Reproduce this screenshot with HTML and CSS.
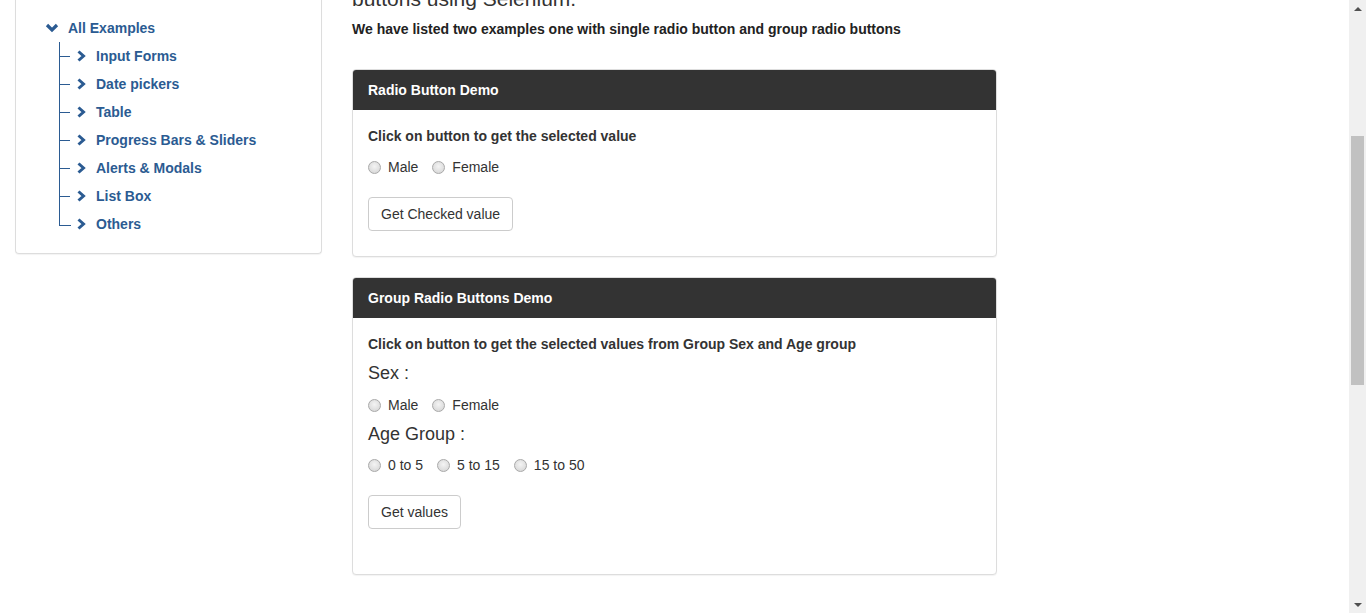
FILE: index.html
```html
<!DOCTYPE html>
<html lang="en">
<head>
<meta charset="utf-8">
<title>Radio Button Demo</title>
<link rel="stylesheet" href="styles.css">
</head>
<body>
<div class="viewport">
  <div class="page">
    <aside class="sidebar-col">
      <div class="side-panel">
        <ul class="tree">
          <li class="tree-root">
            <a class="tree-link root-link" href="#">
              <svg class="chev-down" width="14" height="10" viewBox="0 0 14 10"><polyline points="2,2 7,7 12,2" fill="none" stroke="currentColor" stroke-width="3.2"/></svg>
              All Examples
            </a>
            <ul class="tree-children">
              <li><a class="tree-link" href="#"><svg class="chev-right" width="10" height="12" viewBox="0 0 10 12"><polyline points="1.5,1.5 6.5,6 1.5,10.5" fill="none" stroke="currentColor" stroke-width="3"/></svg>Input Forms</a></li>
              <li><a class="tree-link" href="#"><svg class="chev-right" width="10" height="12" viewBox="0 0 10 12"><polyline points="1.5,1.5 6.5,6 1.5,10.5" fill="none" stroke="currentColor" stroke-width="3"/></svg>Date pickers</a></li>
              <li><a class="tree-link" href="#"><svg class="chev-right" width="10" height="12" viewBox="0 0 10 12"><polyline points="1.5,1.5 6.5,6 1.5,10.5" fill="none" stroke="currentColor" stroke-width="3"/></svg>Table</a></li>
              <li><a class="tree-link" href="#"><svg class="chev-right" width="10" height="12" viewBox="0 0 10 12"><polyline points="1.5,1.5 6.5,6 1.5,10.5" fill="none" stroke="currentColor" stroke-width="3"/></svg>Progress Bars &amp; Sliders</a></li>
              <li><a class="tree-link" href="#"><svg class="chev-right" width="10" height="12" viewBox="0 0 10 12"><polyline points="1.5,1.5 6.5,6 1.5,10.5" fill="none" stroke="currentColor" stroke-width="3"/></svg>Alerts &amp; Modals</a></li>
              <li><a class="tree-link" href="#"><svg class="chev-right" width="10" height="12" viewBox="0 0 10 12"><polyline points="1.5,1.5 6.5,6 1.5,10.5" fill="none" stroke="currentColor" stroke-width="3"/></svg>List Box</a></li>
              <li class="last"><a class="tree-link" href="#"><svg class="chev-right" width="10" height="12" viewBox="0 0 10 12"><polyline points="1.5,1.5 6.5,6 1.5,10.5" fill="none" stroke="currentColor" stroke-width="3"/></svg>Others</a></li>
            </ul>
          </li>
        </ul>
      </div>
    </aside>

    <main class="main-col">
      <h3 class="page-title">buttons using Selenium.</h3>
      <p class="intro">We have listed two examples one with single radio button and group radio buttons</p>

      <section class="card card-one">
        <div class="card-head">Radio Button Demo</div>
        <div class="card-body">
          <p class="lead-bold">Click on button to get the selected value</p>
          <div class="radio-row">
            <label class="radio"><input type="radio" name="optradio" value="Male"><span>Male</span></label>
            <label class="radio"><input type="radio" name="optradio" value="Female"><span>Female</span></label>
          </div>
          <button class="btn btn-one" type="button">Get Checked value</button>
        </div>
      </section>

      <section class="card card-two">
        <div class="card-head">Group Radio Buttons Demo</div>
        <div class="card-body">
          <p class="lead-bold">Click on button to get the selected values from Group Sex and Age group</p>
          <h4 class="group-label sex-label">Sex :</h4>
          <div class="radio-row">
            <label class="radio"><input type="radio" name="gender" value="Male"><span>Male</span></label>
            <label class="radio"><input type="radio" name="gender" value="Female"><span>Female</span></label>
          </div>
          <h4 class="group-label age-label">Age Group :</h4>
          <div class="radio-row">
            <label class="radio"><input type="radio" name="ageGroup" value="0 - 5"><span>0 to 5</span></label>
            <label class="radio"><input type="radio" name="ageGroup" value="5 - 15"><span>5 to 15</span></label>
            <label class="radio"><input type="radio" name="ageGroup" value="15 - 50"><span>15 to 50</span></label>
          </div>
          <button class="btn btn-two" type="button">Get values</button>
        </div>
      </section>
    </main>
  </div>

  <div class="scrollbar">
    <div class="sb-arrow sb-up"></div>
    <div class="sb-track">
      <div class="sb-thumb"></div>
    </div>
    <div class="sb-arrow sb-down"></div>
  </div>
</div>
</body>
</html>
```

FILE: styles.css
```css
* { box-sizing: border-box; }

html, body {
  margin: 0;
  padding: 0;
  height: 613px;
  overflow: hidden;
  background: #fff;
}

body {
  font-family: "Liberation Sans", Arial, sans-serif;
  font-size: 14px;
  line-height: 20px;
  color: #333;
}

.viewport {
  display: flex;
  height: 613px;
}

.page {
  flex: 1;
  display: flex;
  align-items: flex-start;
  padding: 0 15px;
  margin-top: -60px;
}

/* Sidebar */
.sidebar-col {
  width: 307px;
  flex: none;
}

.side-panel {
  border: 1px solid #ddd;
  border-top: none;
  border-radius: 0 0 4px 4px;
  box-shadow: 0 1px 1px rgba(0,0,0,0.05);
  padding: 74px 0 15px 29px;
}

.tree, .tree-children {
  list-style: none;
  margin: 0;
  padding: 0;
}

.tree-link {
  display: flex;
  align-items: center;
  height: 28px;
  color: #2b5b92;
  font-weight: bold;
  text-decoration: none;
}

.root-link svg {
  margin-right: 9px;
}

.tree-children {
  margin-left: 14px;
}

.tree-children li {
  position: relative;
  border-left: 1px solid #2b5b92;
}

.tree-children li .tree-link {
  padding-left: 17px;
}

.tree-children li::before {
  content: "";
  position: absolute;
  left: 0;
  top: 14px;
  width: 10px;
  border-top: 1px solid #2b5b92;
}

.tree-children li.last {
  border-left: none;
  padding-left: 1px;
}

.tree-children li.last::before {
  top: 0;
  height: 15px;
  width: 11px;
  border-top: none;
  border-left: 1px solid #2b5b92;
  border-bottom: 1px solid #2b5b92;
}

.tree-children .chev-right {
  margin-right: 9px;
}

/* Main column */
.main-col {
  width: 645px;
  margin-left: 30px;
  flex: none;
}

.page-title {
  font-size: 21px;
  font-weight: normal;
  line-height: 26px;
  margin: 46px 0 7px;
  color: #333;
  white-space: nowrap;
}

.intro {
  font-weight: bold;
  margin: 0 0 30px;
  color: #222;
}

.card {
  border: 1px solid #ddd;
  border-radius: 4px;
  box-shadow: 0 1px 1px rgba(0,0,0,0.05);
  margin-bottom: 20px;
  background: #fff;
}

.card-head {
  background: #333;
  color: #fff;
  font-weight: bold;
  padding: 10px 15px;
  height: 40px;
  border-radius: 3px 3px 0 0;
}

.card-body {
  padding: 15px;
}

.card-one .card-body {
  padding-top: 16px;
}

.lead-bold {
  font-weight: bold;
  margin: 0 0 11px;
  color: #333;
}

.radio-row {
  display: flex;
  gap: 14px;
  height: 20px;
  align-items: center;
}

.radio {
  display: flex;
  align-items: center;
  color: #333;
}

.radio input {
  appearance: none;
  -webkit-appearance: none;
  width: 13px;
  height: 13px;
  margin: 0 7px 0 0;
  border-radius: 50%;
  border: 1px solid #a9a9a9;
  background: radial-gradient(circle at 50% 40%, #f4f4f4 0%, #dcdcdc 70%, #cfcfcf 100%);
}

.btn {
  font-family: inherit;
  font-size: 14px;
  line-height: 20px;
  color: #333;
  background: #fff;
  border: 1px solid #ccc;
  border-radius: 4px;
  padding: 6px 12px;
  display: block;
}

.btn-one {
  margin-top: 20px;
  margin-bottom: 10px;
}

.card-two .card-body {
  padding-top: 16px;
}

.card-two .lead-bold {
  margin-bottom: 8px;
}

.group-label {
  font-size: 18px;
  font-weight: normal;
  line-height: 22px;
  margin: 0 0 11px;
  color: #333;
}

.age-label {
  margin-bottom: 10px;
}

.card-two .radio-row {
  margin-bottom: 8px;
}

.btn-two {
  margin-top: 20px;
  margin-bottom: 30px;
}

/* Scrollbar */
.scrollbar {
  width: 17px;
  flex: none;
  background: #f0f0f0;
  display: flex;
  flex-direction: column;
}

.sb-arrow {
  height: 17px;
  flex: none;
  display: flex;
  justify-content: center;
  align-items: center;
}

.sb-up::after {
  content: "";
  border-left: 4px solid transparent;
  border-right: 4px solid transparent;
  border-bottom: 4px solid #505050;
}

.sb-down::after {
  content: "";
  border-left: 4px solid transparent;
  border-right: 4px solid transparent;
  border-top: 4px solid #505050;
}

.sb-track {
  flex: 1;
  padding: 119px 2px 0 2px;
}

.sb-thumb {
  height: 249px;
  background: #c1c1c1;
}
```
